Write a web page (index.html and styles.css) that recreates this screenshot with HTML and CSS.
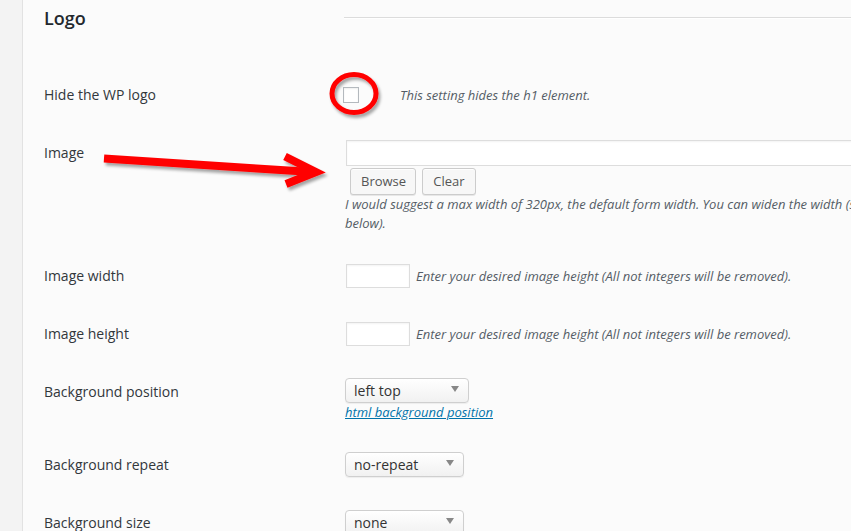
FILE: index.html
```html
<!DOCTYPE html>
<html>
<head>
<meta charset="utf-8">
<link rel="stylesheet" href="styles.css">
</head>
<body>
<div class="page">
  <aside class="sidebar"></aside>
  <main class="main">
    <div class="head-row">
      <h2 class="title">Logo</h2>
      <div class="rule"></div>
    </div>

    <div class="row row-check">
      <div class="label">Hide the WP logo</div>
      <div class="ctrl inline">
        <input type="checkbox" class="check">
        <span class="desc desc-check">This setting hides the h1 element.</span>
      </div>
    </div>

    <div class="row row-image">
      <div class="label">Image</div>
      <div class="ctrl">
        <input type="text" class="text-wide">
        <div class="buttons">
          <button class="btn">Browse</button>
          <button class="btn">Clear</button>
        </div>
        <p class="desc block">I would suggest a max width of 320px, the default form width. You can widen the width (see below).</p>
      </div>
    </div>

    <div class="row row-std">
      <div class="label">Image width</div>
      <div class="ctrl inline">
        <input type="text" class="text-small">
        <span class="desc">Enter your desired image height (All not integers will be removed).</span>
      </div>
    </div>

    <div class="row row-std">
      <div class="label">Image height</div>
      <div class="ctrl inline">
        <input type="text" class="text-small">
        <span class="desc">Enter your desired image height (All not integers will be removed).</span>
      </div>
    </div>

    <div class="row row-pos">
      <div class="label">Background position</div>
      <div class="ctrl">
        <div class="select sel-wide"><span>left top</span><svg class="caret" width="8" height="6" viewBox="0 0 8 6"><path d="M0 0h8L4 6z" fill="#888"/></svg></div>
        <a class="link" href="#">html background position</a>
      </div>
    </div>

    <div class="row row-rep">
      <div class="label">Background repeat</div>
      <div class="ctrl">
        <div class="select"><span>no-repeat</span><svg class="caret" width="8" height="6" viewBox="0 0 8 6"><path d="M0 0h8L4 6z" fill="#888"/></svg></div>
      </div>
    </div>

    <div class="row row-size">
      <div class="label">Background size</div>
      <div class="ctrl">
        <div class="select"><span>none</span><svg class="caret" width="8" height="6" viewBox="0 0 8 6"><path d="M0 0h8L4 6z" fill="#888"/></svg></div>
      </div>
    </div>
  </main>

  <svg class="annot" width="851" height="531" viewBox="0 0 851 531">
    <defs>
      <filter id="sh" x="-20%" y="-40%" width="140%" height="180%">
        <feDropShadow dx="2" dy="3" stdDeviation="1.8" flood-color="#000" flood-opacity="0.35"/>
      </filter>
    </defs>
    <ellipse cx="354" cy="93.5" rx="22" ry="19" fill="none" stroke="#f00" stroke-width="5" filter="url(#sh)"/>
    <g filter="url(#sh)" stroke="#f00" fill="none" stroke-linecap="butt">
      <path d="M104 158.5 L312 172" stroke-width="8"/>
      <path d="M285 156.5 L316 172 L286 184" stroke-width="8" stroke-linejoin="miter"/>
    </g>
  </svg>
</div>
</body>
</html>
```

FILE: styles.css
```css
html, body {
  margin: 0;
  padding: 0;
  overflow: hidden;
  background: #fbfbfb;
}

body {
  font-family: "Open Sans", "Liberation Sans", sans-serif;
  color: #32373c;
}

.page {
  position: relative;
  display: flex;
  width: 851px;
  height: 531px;
  overflow: hidden;
}

.sidebar {
  flex: 0 0 22px;
  background: #f3f3f3;
  border-right: 1px solid #e2e2e2;
}

.main {
  flex: 0 0 auto;
  width: 900px;
  padding-left: 21px;
}

.head-row {
  display: grid;
  grid-template-columns: 301px 1fr;
  height: 70px;
}

.title {
  margin: 0;
  padding-top: 6px;
  font-size: 18px;
  line-height: 24px;
  font-weight: 600;
  color: #23282d;
}

.rule {
  margin-top: 17px;
  height: 0;
  border-top: 1px solid #dcdcdc;
  border-bottom: 1px solid #fff;
  margin-left: -1px;
}

.row {
  display: grid;
  grid-template-columns: 301px 545px;
  align-items: start;
}

.label {
  font-size: 14px;
  line-height: 20px;
  color: #32373c;
}

.ctrl.inline {
  display: flex;
  align-items: center;
}

.row-check { padding: 17px 0 17px; }
.row-check .label { line-height: 16px; }
.row-check .ctrl { height: 16px; }

.row-image { padding: 20px 0 14px; }
.row-image .label { padding-top: 3px; }

.row-std { padding: 17px 0 17px; }
.row-std .label { padding-top: 2px; }
.row-std .ctrl { height: 24px; }

.row-pos { padding: 15px 0 15px; }
.row-pos .label { padding-top: 4px; }

.row-rep { padding: 15px 0 18px; }
.row-rep .label { padding-top: 3px; }

.row-size { padding: 15px 0 0; }
.row-size .label { padding-top: 3px; }

.check {
  -webkit-appearance: none;
  appearance: none;
  margin: 0 0 0 -2px;
  width: 16px;
  height: 16px;
  box-sizing: border-box;
  border: 1px solid #b4b9be;
  background: #fff;
  box-shadow: inset 0 1px 2px rgba(0,0,0,.07);
}

.desc {
  font-size: 13px;
  font-style: italic;
  color: #555d66;
  line-height: 19px;
}

.desc-check {
  margin-left: 41px;
}

.text-wide {
  display: block;
  box-sizing: border-box;
  width: 530px;
  height: 26px;
  margin: 0 0 0 1px;
  border: 1px solid #ddd;
  border-right: none;
  background: #fff;
  box-shadow: inset 0 1px 2px rgba(0,0,0,.05);
  padding: 0;
  outline: none;
}

.text-small {
  box-sizing: border-box;
  width: 64px;
  height: 24px;
  margin: 0 6px 0 1px;
  border: 1px solid #ddd;
  background: #fff;
  box-shadow: inset 0 1px 2px rgba(0,0,0,.05);
  padding: 0;
}

.buttons {
  display: flex;
  gap: 6px;
  margin: 2px 0 0 5px;
}

.btn {
  box-sizing: border-box;
  height: 27px;
  padding: 0 10px;
  font-family: "Open Sans", "Liberation Sans", sans-serif;
  font-size: 13px;
  line-height: 25px;
  color: #555;
  background: #f7f7f7;
  border: 1px solid #cccccc;
  border-radius: 3px;
  box-shadow: inset 0 1px 0 #fff, 0 1px 0 rgba(0,0,0,.08);
}

.btn:first-child { width: 66px; }
.btn:last-child { width: 54px; }

.block {
  margin: 0;
  width: 545px;
}

.select {
  box-sizing: border-box;
  display: flex;
  align-items: center;
  justify-content: space-between;
  width: 119px;
  height: 25px;
  padding: 0 9px 0 8px;
  border: 1px solid #cfcfcf;
  border-radius: 4px;
  background: linear-gradient(#ffffff, #f1f1f1);
  box-shadow: 0 1px 1px rgba(0,0,0,.06);
  font-size: 14px;
  color: #333;
}

.sel-wide { width: 124px; }

.caret { display: block; margin-top: -3px; }

.link {
  display: block;
  font-size: 13px;
  line-height: 19px;
  font-style: italic;
  color: #0073aa;
  text-decoration: underline;
}

.annot {
  position: absolute;
  left: 0;
  top: 0;
  pointer-events: none;
}
```
